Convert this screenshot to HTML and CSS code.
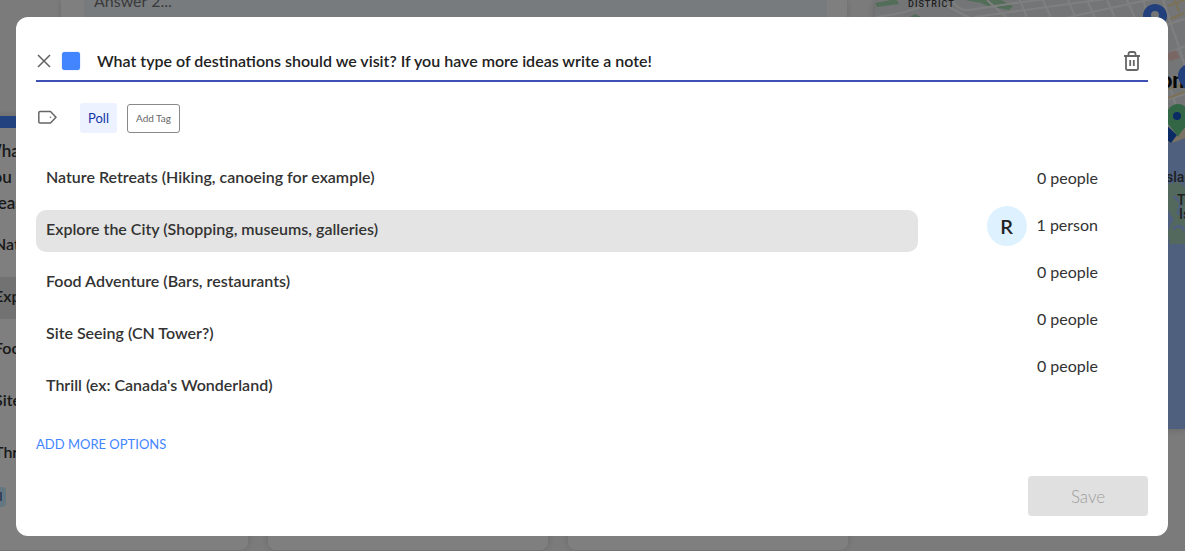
FILE: index.html
```
<!DOCTYPE html>
<html lang="en">
<head>
    <meta charset="UTF-8">
    <meta name="viewport" content="width=device-width, initial-scale=1.0">
    <title>Trip Board</title>
    <link rel="stylesheet" href="styles.css">
</head>
<body>
    <div class="page" aria-hidden="true">
        <div class="feed">
            <div class="composer">
                <div class="composer-answer">Answer 2...</div>
            </div>
            <div class="cards">
                <div class="card card-poll">
                    <h3>What<br>you<br>ideas</h3>
                    <ul>
                        <li>Nature</li>
                        <li class="picked">Explore</li>
                        <li>Food</li>
                        <li>Site</li>
                        <li>Thrill</li>
                    </ul>
                    <span class="card-tag">Poll</span>
                </div>
                <div class="card"></div>
                <div class="card"></div>
            </div>
        </div>
        <svg class="map" viewBox="0 0 310 429" preserveAspectRatio="xMaxYMin slice">
            <rect width="310" height="429" fill="#e8eaed"/>
            <g fill="#a5dbb0">
                <path d="M0 3L21 -1L24 4L2 7zM90 0H126L138 6L134 10L113 6L106 3zM31 19L40 14L46 17H31z"/>
            </g>
            <!-- streets -->
            <g fill="none" stroke="#fff" stroke-width="2">
                <path d="M0 17C30 14 45 8 64 -2M77 0Q83 11 94 10L140 3L202 -5M70 5L95 18M112 0L132 18M145 0L152 18M168 0L176 18M193 0L201 18M212 0L220 18M232 0L240 18M252 0L260 18M100 17L238 -2M190 18L300 -6M268 0L310 135M288 0L310 66M290 25L310 19M290 55L310 46M290 81L310 73M291 100L310 94M300 35L310 66"/>
            </g>
            <g fill="none" stroke="#f6e2a9" stroke-width="2">
                <path d="M293 6L310 0M295 19L310 13M293 89L310 84M293 98L310 92M300 0L304 12"/>
            </g>
            <path d="M292 53L301 50L305 58L294 61z" fill="#f5cfc9"/>
            <path d="M290 143L310 138V429H290z" fill="#9dc0fa"/>
            <path d="M290 143L300 142L310 138V128L297 138z" fill="#f2e3c5"/>
            <path d="M293 184L304 182L310 188V244H295L292 233L299 219L293 210z" fill="#a8d3bd"/>
            <path d="M299 196L306 203L303 213L310 217M298 229Q305 222 310 231" fill="none" stroke="#9dc0fa" stroke-width="3"/>
            <g class="map-labels">
                <text x="33" y="7" class="map-district">DISTRICT</text>
                <text x="253" y="88" class="map-city">Toronto</text>
                <text x="287" y="182">Islands</text>
                <text x="302" y="205">Toronto</text>
                <text x="304" y="219">Island</text>
            </g>
            <path d="M280 36C276 27 268 24 268 16a12 12 0 0 1 24 0c0 8-8 11-12 20z" fill="#4481f7"/>
            <circle cx="280" cy="15" r="4" fill="#e8eaed"/>
            <path d="M315 96C311 88 303 83 303 76a12 12 0 0 1 24 0c0 8-8 12-12 20z" fill="#4481f7"/>
            <path d="M288 122L302 135L296 143L290 139z" fill="#1557c8"/>
            <path d="M303 137C299 129 291 125 291 117a12 13 0 0 1 24 0c0 8-8 12-12 20z" fill="#66cc88"/>
            <circle cx="302" cy="116" r="4" fill="#1557c8"/>
        </svg>
    </div>

    <div class="overlay">
        <form class="modal" role="dialog" aria-label="Edit poll">
            <div class="modal-header">
                <button type="button" class="icon-btn" aria-label="Close">
                    <svg width="16" height="16" viewBox="0 0 16 16" fill="none" stroke="#616161" stroke-width="1.5"><path d="M2 2L14 14M14 2L2 14"/></svg>
                </button>
                <button type="button" class="color-btn" aria-label="Color"></button>
                <input type="text" class="title-input" aria-label="Question" value="What type of destinations should we visit? If you have more ideas write a note!">
                <button type="button" class="icon-btn delete-btn" aria-label="Delete">
                    <svg width="18" height="20" viewBox="0 0 18 20" fill="none" stroke="#666" stroke-width="1.8"><path d="M1 5H17M3 5V17.2Q3 19 4.800 19H13.200Q15 19 15 17.200V5M5.500 5V3Q5.500 1 7.500 1H10.500Q12.500 1 12.500 3V5M7.200 9V15M10.800 9V15"/></svg>
                </button>
            </div>

            <div class="tags">
                <svg class="tag-icon" width="20" height="16" viewBox="0 0 20 16" fill="none" stroke="#666" stroke-width="1.5" stroke-linejoin="round"><path d="M3 1.500H13.500L19 7.200L13.500 13H3Q1.800 13 1.800 11.800V2.700Q1.800 1.500 3 1.500z"/><circle cx="13.500" cy="7.200" r="0.800" fill="#666" stroke="none"/></svg>
                <span class="tag">Poll</span>
                <button type="button" class="add-tag">Add Tag</button>
            </div>

            <div class="poll">
                <div class="options">
                    <button type="button" class="option">Nature Retreats (Hiking, canoeing for example)</button>
                    <button type="button" class="option selected">Explore the City (Shopping, museums, galleries)</button>
                    <button type="button" class="option">Food Adventure (Bars, restaurants)</button>
                    <button type="button" class="option">Site Seeing (CN Tower?)</button>
                    <button type="button" class="option">Thrill (ex: Canada's Wonderland)</button>
                </div>
                <div class="votes">
                    <div class="vote">0 people</div>
                    <div class="vote"><span class="avatar">R</span>1 person</div>
                    <div class="vote">0 people</div>
                    <div class="vote">0 people</div>
                    <div class="vote">0 people</div>
                </div>
            </div>

            <button type="button" class="more-btn">ADD MORE OPTIONS</button>
            <div class="modal-footer">
                <button type="submit" class="save-btn" disabled>Save</button>
            </div>
        </form>
    </div>
</body>
</html>
```
FILE: styles.css
```
* {
    box-sizing: border-box;
}

body {
    margin: 0;
    height: 100vh;
    overflow: hidden;
    font-family: Lato, sans-serif;
    font-size: 16px;
    color: #333;
    background: #f7f7f7;
}

button,
input {
    font-family: inherit;
    border: none;
    background: none;
    padding: 0;
}

button {
    cursor: pointer;
}

/* board behind the dialog */
.page {
    display: flex;
    align-items: flex-start;
    gap: 28px;
}

.feed {
    flex: 1;
    min-width: 0;
}

.composer {
    margin-left: 61px;
    padding: 0 20px 0 23px;
    height: 76px;
    background: #fff;
    box-shadow: 0 0 6px rgba(0,0,0,0.15);
}

.composer-answer {
    height: 46px;
    padding: 0 10px;
    line-height: 1px;
    color: #757575;
    background: #f0f7fd;
}

.cards {
    display: flex;
    gap: 20px;
    margin: 40px 0 0 -32px;
}

.card {
    flex: 0 0 280px;
    height: 434px;
    background: #fff;
    border-radius: 8px;
    box-shadow: 0 0 8px rgba(0,0,0,0.15);
}

.card-poll {
    border-top: 12px solid #4285ff;
    border-radius: 0 0 8px 8px;
    padding: 10px 16px;
}

.card h3 {
    margin: 0;
    font-size: 17px;
    font-weight: 600;
    line-height: 26px;
    white-space: nowrap;
}

.card ul {
    list-style: none;
    margin: 9px 0 0;
    padding: 0;
}

.card li {
    height: 42px;
    margin-bottom: 10px;
    padding: 0 10px;
    line-height: 38px;
    font-weight: 600;
}

.card .picked {
    background: #e4e4e4;
}

.card-tag {
    display: inline-block;
    padding: 0 4px;
    margin-left: -5px;
    font-size: 12px;
    line-height: 20px;
    border-radius: 4px;
    color: #1a3d8f;
    background: #c8ecff;
}

.map {
    flex: 0 0 310px;
    height: 429px;
    box-shadow: 0 0 8px rgba(0,0,0,0.2);
}

.map-labels {
    font-family: Roboto, sans-serif;
    font-size: 14px;
    font-weight: 500;
    fill: #3c4043;
}

.map-district {
    font-size: 9px;
    letter-spacing: 1px;
}

.map-city {
    font-size: 22px;
    font-weight: bold;
    fill: #111;
}

/* dialog */
.overlay {
    position: fixed;
    inset: 0;
    padding: 17px 17px 15px 16px;
    background: rgba(0,0,0,0.5);
}

.modal {
    display: flex;
    flex-direction: column;
    height: 100%;
    padding: 24px 20px 20px;
    border-radius: 12px;
    background: #fff;
}

.modal-header {
    display: flex;
    align-items: center;
    height: 41px;
    border-bottom: 2px solid #3f51b5;
}

.icon-btn {
    display: flex;
}

.color-btn {
    width: 18px;
    height: 18px;
    margin: 0 17px 0 10px;
    border-radius: 3px;
    background: #4285ff;
    box-shadow: 0 0 1px #4285ff;
}

.title-input {
    flex: 1;
    min-width: 0;
    font-size: 16px;
    font-weight: 600;
    color: #222;
    outline: none;
}

.delete-btn {
    margin-right: 7px;
}

.tags {
    display: flex;
    align-items: center;
    height: 30px;
    margin-top: 21px;
}

.tag-icon {
    margin: 0 23px 0 1px;
}

.tag {
    padding: 0 8px;
    font-size: 13px;
    line-height: 30px;
    border-radius: 3px;
    color: #1034a6;
    background: #ecf2ff;
}

.add-tag {
    height: 29px;
    margin-left: 10px;
    padding: 0 8px;
    font-size: 10px;
    color: #666;
    border: 1px solid #888;
    border-radius: 3px;
}

.poll {
    display: flex;
    justify-content: space-between;
    margin-top: 25px;
}

.options {
    flex: 0 0 79.3%;
    display: flex;
    flex-direction: column;
    gap: 10px;
}

.option {
    height: 42px;
    padding: 0 10px 5px;
    font-size: 16px;
    font-weight: 600;
    text-align: left;
    color: #333;
    border-radius: 10px;
}

.option.selected {
    background: #e4e4e4;
}

.votes {
    padding-right: 50px;
}

.vote {
    display: flex;
    align-items: center;
    justify-content: flex-end;
    height: 40px;
    margin-bottom: 7px;
    line-height: 22px;
    padding-bottom: 1px;
}

.avatar {
    width: 40px;
    height: 40px;
    margin: 2px 10px 0 0;
    border-radius: 50%;
    font-size: 20px;
    font-weight: 600;
    line-height: 40px;
    text-align: center;
    color: #222;
    background: #def1ff;
}

.more-btn {
    align-self: flex-start;
    margin-top: 26px;
    font-size: 13px;
    line-height: 20px;
    color: #4285ff;
}

.modal-footer {
    display: flex;
    justify-content: flex-end;
    margin-top: auto;
}

.save-btn {
    width: 120px;
    height: 40px;
    font-size: 17px;
    font-weight: 300;
    color: #9e9e9e;
    border-radius: 4px;
    background: #e0e0e0;
}
```
